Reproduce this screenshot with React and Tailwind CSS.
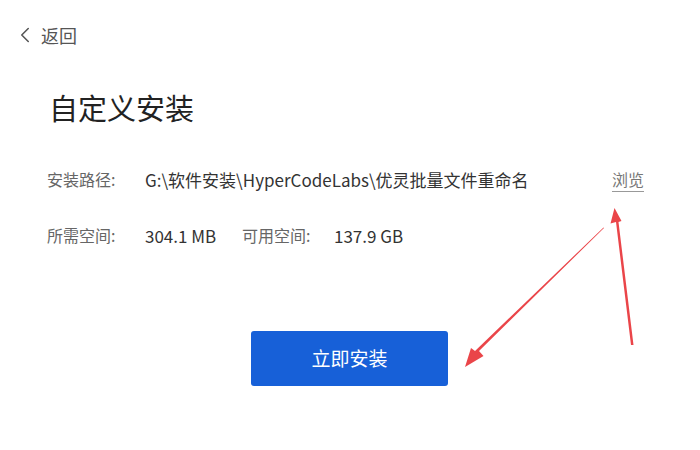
import { ChevronLeft } from "lucide-react";

const FONT = { fontFamily: '"Noto Sans CJK SC", "Noto Sans", sans-serif' };

function Arrows() {
  return (
    <svg className="absolute left-0 top-0 pointer-events-none" width="700" height="450" viewBox="0 0 700 450">
      {/* up arrow to 浏览 */}
      <polygon points="631,345 616,222 610.5,223.5 614.5,208 621.5,221 618.5,222 633.5,345" fill="#e8353a" opacity="0.92" />
      {/* diagonal arrow to button */}
      <polygon points="604,228 479,351 483.5,356 465,367 471,348 475,351 603.5,227.5" fill="#e8353a" opacity="0.92" />
    </svg>
  );
}

export default function App() {
  return (
    <div className="relative w-[700px] h-[450px] bg-white overflow-hidden" style={FONT}>
      <div className="flex items-center pl-[12px] pt-[21px] h-[48px] text-[#555]">
        <ChevronLeft size={26} strokeWidth={1.4} />
        <span className="ml-[3px] text-[18px] leading-none">返回</span>
      </div>

      <h1 className="pl-[49px] mt-[45px] text-[29px] leading-none text-[#222] font-normal">自定义安装</h1>

      <div className="pl-[47px] pr-[56px] mt-[47px] leading-none">
        <div className="flex items-center h-[20px]">
          <span className="w-[98px] text-[16px] text-[#666]">安装路径:</span>
          <span className="text-[17px] text-[#333]">G:\软件安装\HyperCodeLabs\优灵批量文件重命名</span>
          <span className="ml-auto text-[16px] text-[#777] underline underline-offset-[5px] decoration-[#999]">浏览</span>
        </div>
        <div className="flex items-center h-[20px] mt-[36px]">
          <span className="w-[98px] text-[16px] text-[#666]">所需空间:</span>
          <span className="w-[97px] text-[17px] text-[#333]">304.1 MB</span>
          <span className="w-[92px] text-[16px] text-[#666]">可用空间:</span>
          <span className="text-[17px] text-[#333]">137.9 GB</span>
        </div>
      </div>

      <div className="flex justify-center mt-[86px]">
        <button className="w-[197px] h-[55px] ml-[-1px] rounded-[3px] bg-[#1760d8] text-white text-[19px]">
          立即安装
        </button>
      </div>

      <Arrows />
    </div>
  );
}
